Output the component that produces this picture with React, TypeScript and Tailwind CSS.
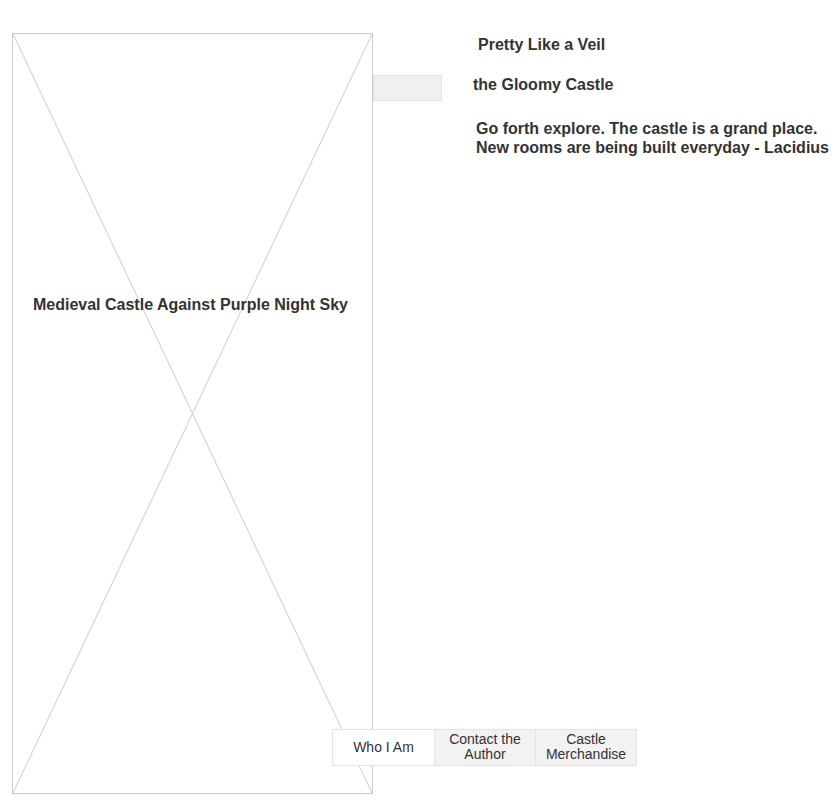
import React from "react";

export default function App() {
  return (
    <div
      className="relative w-[839px] h-[806px] bg-white text-[#333333] overflow-hidden"
      style={{ fontFamily: '"Liberation Sans", Arial, sans-serif' }}
    >
      <div className="flex items-start pl-[12px] pt-[33px]">
        {/* image placeholder */}
        <div className="relative w-[361px] h-[761px] border border-[#cccccc] shrink-0">
          <svg
            className="absolute inset-0"
            width="100%"
            height="100%"
            viewBox="0 0 359 759"
            preserveAspectRatio="none"
          >
            <line x1="0" y1="0" x2="359" y2="759" stroke="#cccccc" strokeWidth="1" />
            <line x1="359" y1="0" x2="0" y2="759" stroke="#cccccc" strokeWidth="1" />
          </svg>
          <div className="relative pt-[262px] text-center font-bold text-[16px] leading-[18px] pr-[4px]">
            Medieval Castle Against Purple Night Sky
          </div>
        </div>
        {/* small gray box */}
        <div className="mt-[42px] w-[69px] h-[26px] bg-[#f0f0f0] border border-[#e3e3e3] shrink-0" />
        {/* text column */}
        <div className="flex flex-col font-bold text-[16px]">
          <div className="ml-[36px] mt-[3px] leading-[18px]">Pretty Like a Veil</div>
          <div className="ml-[31px] mt-[22px] leading-[18px]">the Gloomy Castle</div>
          <div className="ml-[34px] mt-[25px] leading-[19px] whitespace-nowrap">
            Go forth explore. The castle is a grand place.
            <br />
            New rooms are being built everyday - Lacidius
          </div>
        </div>
      </div>

      {/* tabs overlay */}
      <div className="absolute left-[332px] top-[729px] flex border border-[#e3e3e3] text-[14px] leading-[15px] text-[#333333]">
        <div className="w-[101px] h-[35px] bg-white flex items-center justify-center text-center">
          Who I Am
        </div>
        <div className="w-[101px] h-[35px] pb-[1px] bg-[#f2f2f2] border-l border-[#e3e3e3] flex items-center justify-center text-center">
          Contact the
          <br />
          Author
        </div>
        <div className="w-[101px] h-[35px] pb-[1px] bg-[#f2f2f2] border-l border-[#e3e3e3] flex items-center justify-center text-center">
          Castle
          <br />
          Merchandise
        </div>
      </div>
    </div>
  );
}
